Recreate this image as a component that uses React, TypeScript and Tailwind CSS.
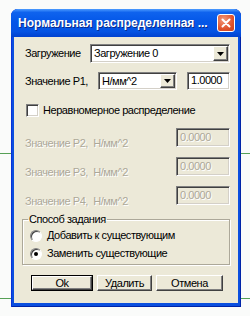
import React from 'react';

const sunken =
  'border border-t-[#808080] border-l-[#808080] border-b-white border-r-white shadow-[inset_1px_1px_0_#404040,inset_-1px_-1px_0_#d4d0c8]';
const raised =
  'border border-t-white border-l-white border-b-[#404040] border-r-[#404040] shadow-[inset_-1px_-1px_0_#808080]';
const disabledText = 'text-[#aca899] [text-shadow:1px_1px_0_#ffffff]';

function Combo({ value, className }: { value: string; className: string }) {
  return (
    <div className={`flex h-full items-stretch bg-white ${sunken} ${className}`}>
      <span className="flex-1 pl-[3px] pt-[2px] leading-[13px] truncate">{value}</span>
      <span className={`m-[1px] flex w-[15px] items-center justify-center bg-[#ece9d8] ${raised}`}>
        <svg width="7" height="4" viewBox="0 0 7 4">
          <path d="M0 0h7L3.5 4z" fill="#000" />
        </svg>
      </span>
    </div>
  );
}

function ValueRow({ label, value }: { label: string; value: string }) {
  return (
    <div className="ml-[3px] flex h-[19px] items-end justify-between">
      <span className={`whitespace-pre leading-[13px] mb-[-3px] ${disabledText}`}>{label}</span>
      <div className={`h-full w-[54px] bg-[#ece9d8] pl-[3px] pt-[2px] leading-[13px] ${sunken} ${disabledText}`}>
        {value}
      </div>
    </div>
  );
}

function Radio({ label, checked }: { label: string; checked?: boolean }) {
  return (
    <div className="flex h-[14px] items-center">
      <span className="flex h-[12px] w-[12px] items-center justify-center rounded-full border border-t-[#808080] border-l-[#808080] border-b-white border-r-white bg-white shadow-[inset_1px_1px_0_#404040]">
        {checked && <span className="h-[4px] w-[4px] rounded-full bg-black" />}
      </span>
      <span className="ml-[5px]">{label}</span>
    </div>
  );
}

export default function App() {
  return (
    <div className="relative h-[316px] w-[250px] overflow-hidden bg-[#fafbfa] font-['Liberation_Sans',Arial,sans-serif] text-[11px] tracking-[-0.45px] text-black">
      <div className="absolute left-0 right-0 top-[153px] h-px bg-[#56a056]" />
      <div className="absolute left-0 right-0 top-[298px] h-px bg-[#56a056]" />

      <div className="absolute left-[11px] top-[9px] flex h-[298px] w-[230px] flex-col rounded-t-[7px] bg-[#0b4fdf] shadow-[inset_1px_0_0_#0831d9,inset_-1px_0_0_#0024a8,inset_0_-1px_0_#0024a8]">
        <div className="flex h-[28px] items-center rounded-t-[7px] bg-[linear-gradient(to_bottom,#4d9cff_0%,#0f63ee_12%,#0457e8_45%,#0553e3_80%,#0141cf_100%)] pl-[7px] pr-[6px]">
          <span className="flex-1 truncate text-[12px] font-bold tracking-[0px] text-white [text-shadow:1px_1px_0_#0a2a8a]">
            Нормальная распределенная ...
          </span>
          <span className="flex h-[18px] w-[18px] items-center justify-center rounded-[3px] border border-white bg-[radial-gradient(circle_at_35%_30%,#f29a7c,#e0532c_60%,#c8401c)]">
            <svg width="10" height="10" viewBox="0 0 10 10">
              <path d="M1.5 1.5l7 7M8.5 1.5l-7 7" stroke="#fff" strokeWidth="2" strokeLinecap="round" />
            </svg>
          </span>
        </div>

        <div className="mx-[3px] mb-[4px] flex flex-1 flex-col bg-[#ece9d8] pl-[8px] pr-[8px] pt-[7px]">
          <div className="ml-[3px] flex h-[19px] items-center">
            <span className="w-[65px]">Загружение</span>
            <Combo value="Загружение 0" className="flex-1" />
          </div>

          <div className="ml-[3px] mt-[9px] flex h-[18px] items-center">
            <span className="w-[73px]">Значение P1,</span>
            <Combo value="Н/мм^2" className="w-[79px]" />
            <div className={`ml-[10px] h-full flex-1 bg-white pl-[3px] pt-[1px] leading-[13px] ${sunken}`}>1.0000</div>
          </div>

          <div className="ml-[4px] mt-[14px] flex h-[13px] items-center">
            <span className={`h-[13px] w-[13px] bg-white ${sunken}`} />
            <span className="ml-[4px]">Неравномерное распределение</span>
          </div>

          <div className="mt-[11px] flex flex-col gap-[10px]">
            <ValueRow label="Значение P2,  Н/мм^2" value="0.0000" />
            <ValueRow label="Значение P3,  Н/мм^2" value="0.0000" />
            <ValueRow label="Значение P4,  Н/мм^2" value="0.0000" />
          </div>

          <fieldset className="mt-[6px] h-[54px] border border-[#aca899] px-[7px] pb-0 pt-0 shadow-[inset_1px_1px_0_#fff,1px_1px_0_#fff]">
            <legend className="ml-[-2px] px-[1px]">Способ задания</legend>
            <div className="mt-[1px] flex flex-col gap-[4px]">
              <Radio label="Добавить к существующим" />
              <Radio label="Заменить существующие" checked />
            </div>
          </fieldset>

          <div className="ml-[9px] mt-[10px] flex gap-[4px]">
            <button className="h-[16px] w-[62px] border border-black p-0">
              <span className={`flex h-full w-full items-center justify-center bg-[#ece9d8] ${raised}`}>Ok</span>
            </button>
            <button className={`flex h-[16px] w-[55px] items-center justify-center bg-[#ece9d8] p-0 ${raised}`}>
              Удалить
            </button>
            <button className={`flex h-[16px] w-[67px] items-center justify-center bg-[#ece9d8] p-0 ${raised}`}>
              Отмена
            </button>
          </div>
        </div>
      </div>
    </div>
  );
}
